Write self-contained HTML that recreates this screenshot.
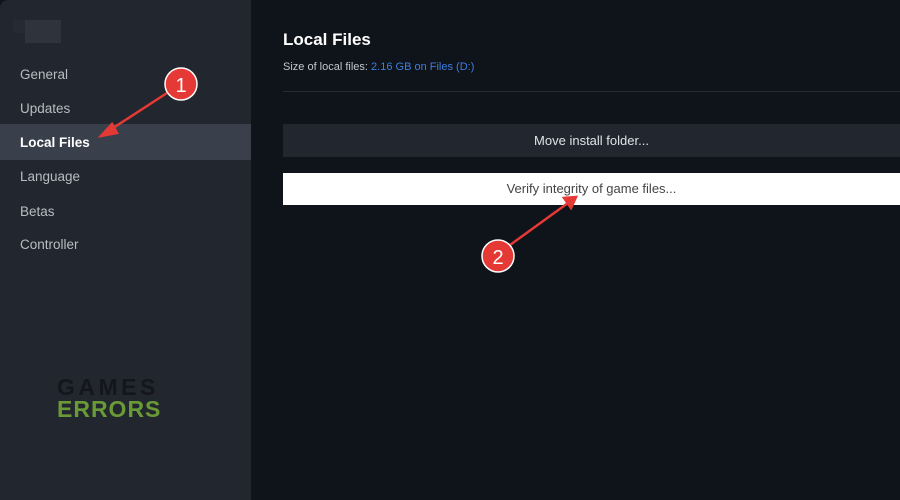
<!DOCTYPE html><html><head><style>
body{margin:0;width:900px;height:500px;overflow:hidden;background:#0f131a;font-family:"Liberation Sans",sans-serif;position:relative}
.sb{position:absolute;left:0;top:0;width:251px;height:500px;background:#22262e;border-top-left-radius:8px}
.it{position:absolute;left:20px;font-size:13.5px;color:#b8bcc2}
.sel{position:absolute;left:0;top:124px;width:251px;height:36px;background:#3a404b}
.btn{position:absolute;left:283px;width:617px;text-align:center;font-size:13px}
</style></head><body>
<div class="sb">
<div style="position:absolute;left:13px;top:20px;width:12px;height:13px;background:#262a33"></div>
<div style="position:absolute;left:25px;top:20px;width:36px;height:23px;background:#2e333c"></div>
<div class="sel"></div>
<div class="it" style="top:67px">General</div>
<div class="it" style="top:101px">Updates</div>
<div class="it" style="top:135px;color:#fff;font-weight:bold">Local Files</div>
<div class="it" style="top:169px">Language</div>
<div class="it" style="top:204px">Betas</div>
<div class="it" style="top:237px">Controller</div>
<div style="position:absolute;left:57px;top:376px;font-size:23px;font-weight:bold;color:#14161b;line-height:22px;letter-spacing:1px"><span style="letter-spacing:3.5px">GAMES</span><br><span style="color:#6a9a36">ERRORS</span></div>
</div>
<div style="position:absolute;left:283px;top:30px;font-size:17px;font-weight:bold;color:#fff">Local Files</div>
<div style="position:absolute;left:283px;top:61px;font-size:11px;color:#c4c8cc">Size of local files: <span style="color:#3d7fe0">2.16 GB on Files (D:)</span></div>
<div style="position:absolute;left:283px;top:91px;width:617px;height:1px;background:#262b33"></div>
<div class="btn" style="top:124px;height:33px;line-height:33px;background:#22262e;color:#dfe2e5">Move install folder...</div>
<div class="btn" style="top:173px;height:32px;line-height:32px;background:#fff;color:#444">Verify integrity of game files...</div>
<svg width="900" height="500" style="position:absolute;left:0;top:0">
<g stroke="#e53935" stroke-width="2.5" fill="#e53935">
<line x1="167" y1="93" x2="110" y2="130"/><polygon points="101,136 112,124 117,133" />
<line x1="510" y1="245" x2="568" y2="203"/><polygon points="576,197 564,198 571,208"/>
</g>
<circle cx="181" cy="84" r="16" fill="#e53935" stroke="#fff" stroke-width="1.5"/>
<text x="181" y="92" font-size="20" fill="#fff" text-anchor="middle" font-family="Liberation Sans">1</text>
<circle cx="498" cy="256" r="16" fill="#e53935" stroke="#fff" stroke-width="1.5"/>
<text x="498" y="264" font-size="20" fill="#fff" text-anchor="middle" font-family="Liberation Sans">2</text>
</svg>
</body></html>
